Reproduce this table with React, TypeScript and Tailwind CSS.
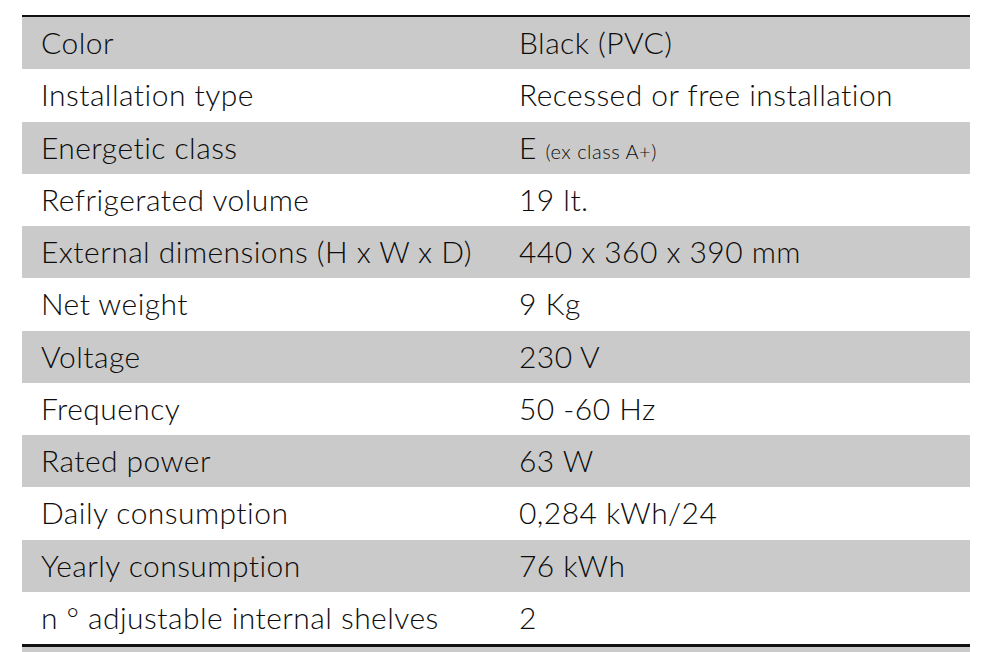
import React from "react";

const rows: [string, React.ReactNode][] = [
  ["Color", "Black (PVC)"],
  ["Installation type", "Recessed or free installation"],
  [
    "Energetic class",
    <>
      E <span className="text-[20px] tracking-[0.5px]">(ex class A+)</span>
    </>,
  ],
  ["Refrigerated volume", "19 lt."],
  ["External dimensions (H x W x D)", "440 x 360 x 390 mm"],
  ["Net weight", "9 Kg"],
  ["Voltage", "230 V"],
  ["Frequency", "50 -60 Hz"],
  ["Rated power", "63 W"],
  ["Daily consumption", "0,284 kWh/24"],
  ["Yearly consumption", "76 kWh"],
  ["n ° adjustable internal shelves", "2"],
];

export default function App() {
  return (
    <div
      className="w-[984px] h-[652px] bg-white overflow-hidden pt-[15px] pl-[22px]"
      style={{ fontFamily: "Lato, 'Open Sans', sans-serif" }}
    >
      <div className="w-[948px] border-t-[2.5px] border-b-[3px] border-[#111]">
        {rows.map(([k, v], i) => (
          <div
            key={i}
            className={`flex items-center h-[52.25px] pl-[19px] text-[30px] font-light tracking-[0.45px] text-[#0c0c0c] leading-none ${
              i % 2 === 0 ? "bg-[#cacaca]" : "bg-white"
            }`}
          >
            <div className="w-[478px] pb-[2px]">{k}</div>
            <div className="flex-1 pb-[2px]">{v}</div>
          </div>
        ))}
      </div>
      <div className="w-[948px] h-[10px] bg-[#cacaca]" />
    </div>
  );
}
